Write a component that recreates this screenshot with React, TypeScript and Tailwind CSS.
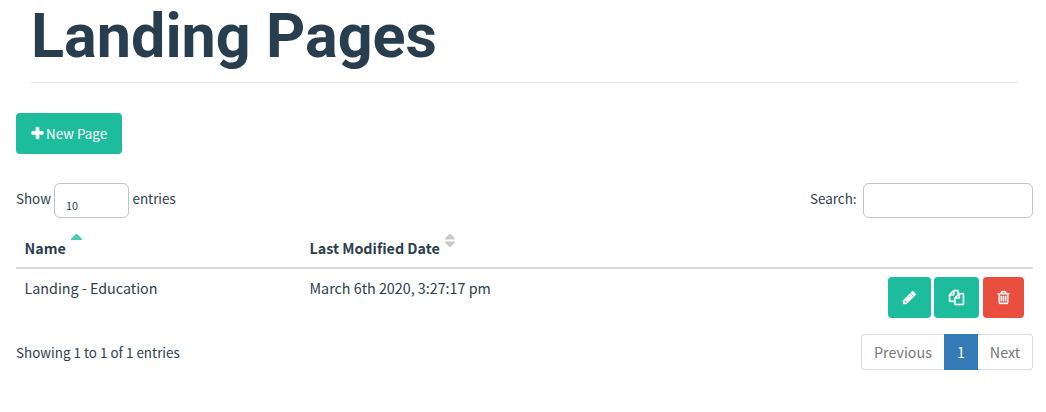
import React from "react";

const paths = {
  plus: "M1600 736v192q0 40-28 68t-68 28h-416v416q0 40-28 68t-68 28h-192q-40 0-68-28t-28-68v-416h-416q-40 0-68-28t-28-68v-192q0-40 28-68t68-28h416v-416q0-40 28-68t68-28h192q40 0 68 28t28 68v416h416q40 0 68 28t28 68z",
  pencil:
    "M491 1536l91-91-235-235-91 91v107h128v128h107zM1014 608q0-22-22-22-10 0-17 7l-542 542q-7 7-7 17 0 22 22 22 10 0 17-7l542-542q7-7 7-17zM960 416l416 416-832 832h-416v-416zM1643 512q0 53-37 90l-166 166-416-416 166-165q36-38 90-38 53 0 91 38l235 234q37 39 37 91z",
  copy: "M1696 384q40 0 68 28t28 68v1216q0 40-28 68t-68 28h-960q-40 0-68-28t-28-68v-288h-544q-40 0-68-28t-28-68v-672q0-40 20-88t48-76l408-408q28-28 76-48t88-20h416q40 0 68 28t28 68v328q68-40 128-40h416zM1152 597l-299 299h299v-299zM512 213l-299 299h299v-299zM708 860l316-316v-416h-384v416q0 40-28 68t-68 28h-416v640h512v-256q0-40 20-88t48-76zM1664 1664v-1152h-384v416q0 40-28 68t-68 28h-416v640h896z",
  trash:
    "M704 736v576q0 14-9 23t-23 9h-64q-14 0-23-9t-9-23v-576q0-14 9-23t23-9h64q14 0 23 9t9 23zM960 736v576q0 14-9 23t-23 9h-64q-14 0-23-9t-9-23v-576q0-14 9-23t23-9h64q14 0 23 9t9 23zM1216 736v576q0 14-9 23t-23 9h-64q-14 0-23-9t-9-23v-576q0-14 9-23t23-9h64q14 0 23 9t9 23zM1344 1460v-948h-896v948q0 22 7 40.5t14.5 27 10.5 8.5h832q3 0 10.5-8.5t14.5-27 7-40.5zM672 384h448l-48-117q-7-9-17-11h-317q-10 2-17 11zM1600 416v64q0 14-9 23t-23 9h-96v948q0 83-47 143.5t-113 60.5h-832q-66 0-113-58.5t-47-141.5v-952h-96q-14 0-23-9t-9-23v-64q0-14 9-23t23-9h309l70-167q15-37 54-63t79-26h320q40 0 79 26t54 63l70 167h309q14 0 23 9t9 23z",
};

function Icon({ name, className = "size-[15px]" }: { name: keyof typeof paths; className?: string }) {
  return (
    <svg viewBox="0 0 1792 1792" fill="currentColor" stroke="currentColor" className={`overflow-visible ${className}`} aria-hidden="true">
      <path d={paths[name]} />
    </svg>
  );
}

export default function App() {
  return (
    <div className="h-[412px] overflow-hidden bg-white pr-[13px] pl-4 font-['Noto_Sans_CJK_SC',sans-serif] text-[13.4px] leading-5 text-[#2c3e50]">
      <header className="mr-[15px] ml-[15px] h-[83px] border-b border-[#e7e9eb]">
        <h1 className="pt-px font-['Roboto',sans-serif] text-[61.1px] leading-[70px] font-bold whitespace-nowrap text-[#283e4f]">
          Landing Pages
        </h1>
      </header>

      <button className="mt-[30px] flex h-[41px] w-[106px] items-center gap-px rounded bg-[#1dbc9c] pl-[14px] whitespace-nowrap text-white">
        <Icon name="plus" className="size-[15px] stroke-[60]" />
        <span className="pb-px">New Page</span>
      </button>

      <div className="mt-[29px] flex h-[35px] items-center justify-between">
        <label className="flex items-center">
          <span className="w-[38px] pb-[5px]">Show</span>
          <span className="flex h-[35px] w-[75px] items-end rounded-md border border-[#bfc4c8] pb-[2px] pl-[11px] text-[10.8px]">
            10
          </span>
          <span className="ml-[3.5px] pb-[5px]">entries</span>
        </label>
        <label className="flex items-center">
          <span className="pb-[5px]">Search:</span>
          <input className="ml-[6.5px] h-[35px] w-[170px] rounded-md border border-[#bfc4c8] outline-none" />
        </label>
      </div>

      <div className="mt-[15px] flex h-9 items-start border-b-2 border-[#dcdcdc] pl-[8.5px] text-[14.3px] font-bold">
        <div className="flex w-[285px] gap-[5px]">
          <span className="pt-[5px]">Name</span>
          <svg width="11" height="6" viewBox="0 0 11 6" className="mt-[1px] fill-[#4ac9b0]">
            <path d="M5 0H6L11 5V6H0V5Z" />
          </svg>
        </div>
        <div className="flex gap-[5px]">
          <span className="pt-[5px]">Last Modified Date</span>
          <svg width="10" height="13" viewBox="0 0 10 13" className="mt-[1px] fill-[#c9c9c9]">
            <path d="M4.5 0H5.5L10 4.5V5.5H0V4.5ZM0 7.5H10V8.5L5.5 13H4.5L0 8.5Z" />
          </svg>
        </div>
      </div>

      <div className="flex h-[65px] items-start pt-2 pr-[9px] pl-[8.5px] text-[14.3px]">
        <span className="w-[285px] pt-px">Landing - Education</span>
        <span className="pt-px">March 6th 2020, 3:27:17 pm</span>
        <div className="ml-auto flex text-white">
          <button className="flex h-[41px] w-[43px] items-center justify-center rounded bg-[#1dbc9c]">
            <Icon name="pencil" className="size-[15px] stroke-[50]" />
          </button>
          <button className="ml-[3px] flex h-[41px] w-[45px] items-center justify-center rounded bg-[#1dbc9c]">
            <Icon name="copy" className="size-[15px] stroke-[70]" />
          </button>
          <button className="ml-1 flex h-[41px] w-[41px] items-center justify-center rounded bg-[#e94e3e]">
            <Icon name="trash" className="size-[15px] stroke-[50]" />
          </button>
        </div>
      </div>

      <div className="flex h-9 items-center justify-between">
        <span className="tracking-[0.02px]">Showing 1 to 1 of 1 entries</span>
        <nav className="flex h-9 w-[172px] text-[14.3px] text-[#777]">
          <a className="flex w-[83px] items-center justify-center rounded-l border border-r-0 border-[#ddd]">
            Previous
          </a>
          <a className="flex w-[34px] items-center justify-center bg-[#337ab7] text-white">1</a>
          <a className="flex w-[55px] items-center justify-center rounded-r border border-l-0 border-[#ddd]">
            Next
          </a>
        </nav>
      </div>
    </div>
  );
}
